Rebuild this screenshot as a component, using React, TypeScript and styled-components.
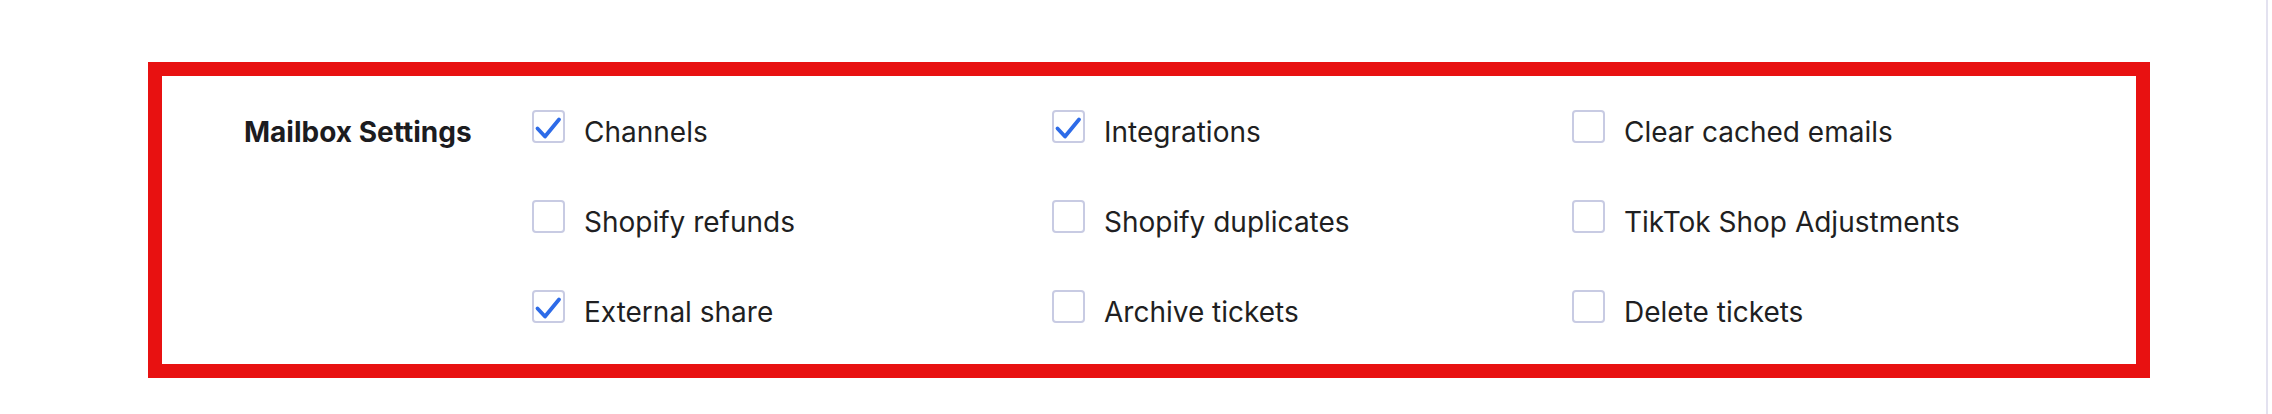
import styled, { createGlobalStyle } from 'styled-components';

type Option = {
    label: string
    checked: boolean
}

const options: Option[] = [
    {label: 'Channels', checked: true},
    {label: 'Integrations', checked: true},
    {label: 'Clear cached emails', checked: false},
    {label: 'Shopify refunds', checked: false},
    {label: 'Shopify duplicates', checked: false},
    {label: 'TikTok Shop Adjustments', checked: false},
    {label: 'External share', checked: true},
    {label: 'Archive tickets', checked: false},
    {label: 'Delete tickets', checked: false},
];

const GlobalStyle = createGlobalStyle`
  html, body {
    margin: 0;
    padding: 0;
    background: #fff;
  }
  body {
    font-family: Inter, "Noto Sans", sans-serif;
    color: #1f1f22;
  }
`;

const CheckMark = () => (
    <svg width="33" height="33" viewBox="0 0 33 33" fill="none">
        <path d="M5.5 18.5L13 26.5L27 9.5"
              stroke="#2d6be8"
              strokeWidth="3.8"
              strokeLinecap="round"
              strokeLinejoin="round"/>
    </svg>
);

export default function App() {
    return (
        <>
            <GlobalStyle/>
            <Page>
                <Main>
                    <Highlight>
                        <Section>
                            <SectionTitle>Mailbox Settings</SectionTitle>
                            <Options>
                                {options.map((opt) => (
                                    <Item key={opt.label}>
                                        <Box>{opt.checked && <CheckMark/>}</Box>
                                        <ItemLabel>{opt.label}</ItemLabel>
                                    </Item>
                                ))}
                            </Options>
                        </Section>
                    </Highlight>
                </Main>
                <Divider/>
            </Page>
        </>
    );
}

const Page = styled.div`
  display: flex;
  height: 414px;
  width: 2272px;
`;

const Main = styled.div`
  flex: 0 0 2266px;
  padding: 62px 0 0 148px;
  box-sizing: border-box;
`;

const Divider = styled.div`
  width: 2px;
  background: #e3e2f0;
`;

const Highlight = styled.div`
  width: 2002px;
  height: 316px;
  box-sizing: border-box;
  border: 14px solid #e81111;
`;

const Section = styled.div`
  display: flex;
  padding: 34px 0 0 82px;
`;

const SectionTitle = styled.div`
  flex: 0 0 288px;
  font-size: 28px;
  font-weight: 700;
  line-height: 34px;
  padding-top: 5px;
  color: #1c1c1f;
`;

const Options = styled.div`
  display: grid;
  grid-template-columns: repeat(3, 520px);
  grid-auto-rows: 34px;
  row-gap: 56px;
`;

const Item = styled.label`
  display: flex;
  align-items: flex-start;
  gap: 19px;
  cursor: pointer;
`;

const Box = styled.span`
  width: 33px;
  height: 33px;
  box-sizing: border-box;
  border: 2px solid #c8cbe3;
  border-radius: 4px;
  display: flex;
  align-items: center;
  justify-content: center;
  flex-shrink: 0;

  svg {
    margin: -2px;
  }
`;

const ItemLabel = styled.span`
  font-size: 28px;
  line-height: 34px;
  padding-top: 5px;
  white-space: nowrap;
`;
